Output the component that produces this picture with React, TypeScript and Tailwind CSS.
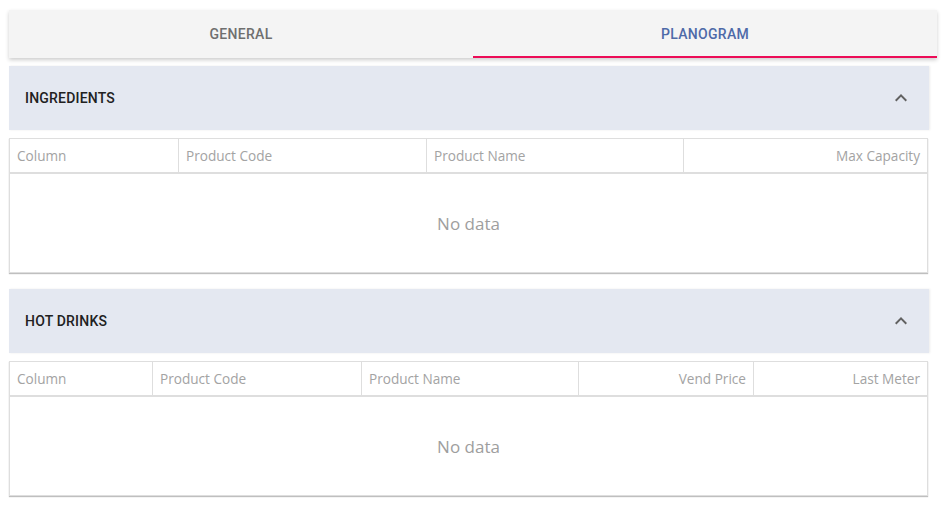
import React from 'react';

const roboto = { fontFamily: 'Roboto, "Noto Sans", sans-serif' };

function ChevronUp() {
  return (
    <svg width="24" height="24" viewBox="0 0 24 24" className="fill-[#616161]">
      <path d="M7.41 15.41L12 10.83l4.59 4.58L18 14l-6-6-6 6z" />
    </svg>
  );
}

interface SectionProps {
  title: string;
  cols: string;
  headers: { label: string; right?: boolean }[];
}

function Section({ title, cols, headers }: SectionProps) {
  return (
    <div className="w-[920px]">
      {/* Header */}
      <div className="h-[64px] bg-[#e4e8f1] flex items-center justify-between pl-4 pr-[16px] shadow-[1px_0_2px_rgba(0,0,0,0.08)]">
        <span className="text-[14px] font-medium text-[#212121] tracking-[0.2px]" style={roboto}>
          {title}
        </span>
        <ChevronUp />
      </div>

      {/* Table */}
      <div
        className="mt-2 w-[919px] border border-[#dedede] bg-white shadow-[0_1px_1px_rgba(0,0,0,0.25)]"
        style={{ fontFamily: '"Open Sans", sans-serif' }}
      >
        <div className={`grid ${cols} h-[35px] border-b-2 border-[#dedede]`}>
          {headers.map((h, i) => (
            <div
              key={h.label}
              className={`flex items-center px-[7px] pt-[1px] text-[13.6px] text-[#a3a3a3] ${
                i > 0 ? 'border-l border-[#dedede]' : ''
              } ${h.right ? 'justify-end' : ''}`}
            >
              {h.label}
            </div>
          ))}
        </div>
        <div className="h-[98px] flex items-center justify-center pt-[2px] text-[17px] text-[#9e9e9e]">No data</div>
      </div>
    </div>
  );
}

export default function App() {
  return (
    <div className="min-h-screen bg-white pl-[9px] pt-[10px]">
      {/* Tabs */}
      <div className="w-[928px] h-[48px] bg-[#f4f4f4] flex shadow-[0_2px_4px_rgba(0,0,0,0.2)]" style={roboto}>
        <div className="flex-1 flex items-center justify-center text-[14px] font-medium text-[#6f6f6f] tracking-[0.3px]">
          GENERAL
        </div>
        <div className="flex-1 relative flex items-center justify-center text-[14px] font-medium text-[#4e6aa8] tracking-[0.3px]">
          PLANOGRAM
          <div className="absolute left-0 right-0 bottom-0 h-[2px] bg-[#ec0c57]" />
        </div>
      </div>

      <div className="mt-2 flex flex-col gap-4">
        <Section
          title="INGREDIENTS"
          cols="grid-cols-[168px_248px_257px_1fr]"
          headers={[
            { label: 'Column' },
            { label: 'Product Code' },
            { label: 'Product Name' },
            { label: 'Max Capacity', right: true },
          ]}
        />
        <Section
          title="HOT DRINKS"
          cols="grid-cols-[142px_209px_217px_175px_1fr]"
          headers={[
            { label: 'Column' },
            { label: 'Product Code' },
            { label: 'Product Name' },
            { label: 'Vend Price', right: true },
            { label: 'Last Meter', right: true },
          ]}
        />
      </div>
    </div>
  );
}
